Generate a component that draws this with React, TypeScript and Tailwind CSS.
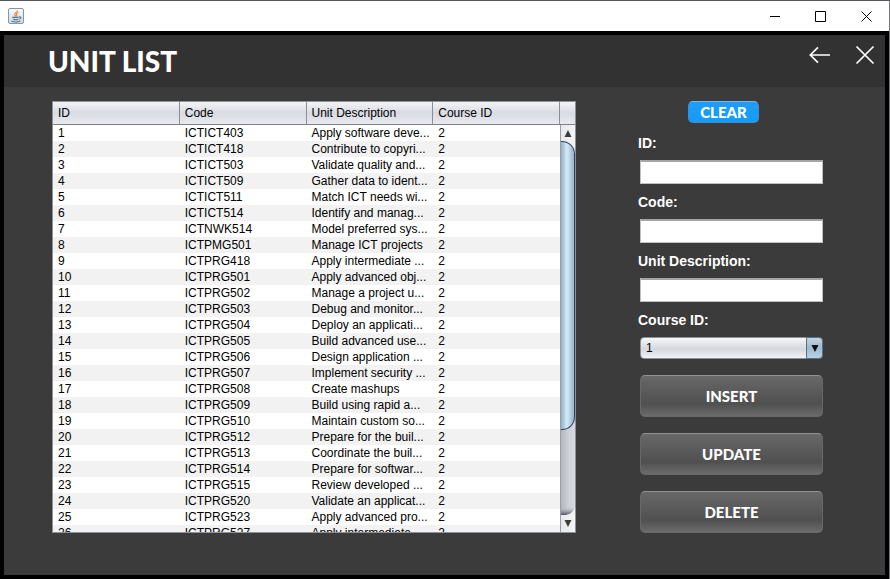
import { useId, type ReactNode } from 'react';

const columns = ['ID', 'Code', 'Unit Description', 'Course ID'];

const units: [string, string][] = [
  ['ICTICT403', 'Apply software deve...'],
  ['ICTICT418', 'Contribute to copyri...'],
  ['ICTICT503', 'Validate quality and...'],
  ['ICTICT509', 'Gather data to ident...'],
  ['ICTICT511', 'Match ICT needs wi...'],
  ['ICTICT514', 'Identify and manag...'],
  ['ICTNWK514', 'Model preferred sys...'],
  ['ICTPMG501', 'Manage ICT projects'],
  ['ICTPRG418', 'Apply intermediate ...'],
  ['ICTPRG501', 'Apply advanced obj...'],
  ['ICTPRG502', 'Manage a project u...'],
  ['ICTPRG503', 'Debug and monitor...'],
  ['ICTPRG504', 'Deploy an applicati...'],
  ['ICTPRG505', 'Build advanced use...'],
  ['ICTPRG506', 'Design application ...'],
  ['ICTPRG507', 'Implement security ...'],
  ['ICTPRG508', 'Create mashups'],
  ['ICTPRG509', 'Build using rapid a...'],
  ['ICTPRG510', 'Maintain custom so...'],
  ['ICTPRG512', 'Prepare for the buil...'],
  ['ICTPRG513', 'Coordinate the buil...'],
  ['ICTPRG514', 'Prepare for softwar...'],
  ['ICTPRG515', 'Review developed ...'],
  ['ICTPRG520', 'Validate an applicat...'],
  ['ICTPRG523', 'Apply advanced pro...'],
  ['ICTPRG527', 'Apply intermediate ...'],
];

function JavaIcon() {
  return (
    <svg width="16" height="16" viewBox="0 0 16 16" fill="none" aria-hidden="true">
      <defs>
        <linearGradient id="tile" x1="0" y1="0" x2="0" y2="1">
          <stop offset="0" stopColor="#fafafa" />
          <stop offset="1" stopColor="#cfdbe3" />
        </linearGradient>
      </defs>
      <rect x="0.5" y="0.5" width="15" height="15" rx="1.5" fill="url(#tile)" stroke="#7f97a8" />
      <path d="M9.5 2.3C10 4 6.2 4.8 6.6 6.5C6.8 7.3 7.8 7.8 7.6 8.5M10.4 4.6C8.2 5.4 8 6.2 8.8 7.2C9.1 7.7 8.8 8.2 8.5 8.5" stroke="#e5813b" strokeWidth="1.1" />
      <path d="M4.2 9.4H10.6M5.2 11.2C6.8 11.8 8.8 11.8 10.4 11.2M11 9C13.6 8.2 13.6 10.6 11.2 11.2M3.5 13C5.8 14 10 14 12.4 13" stroke="#4d7591" strokeWidth="1.1" />
    </svg>
  );
}

function WindowButton({ label, children }: { label: string; children: ReactNode }) {
  return (
    <button type="button" aria-label={label} className="flex h-[30px] w-[46px] items-center justify-center text-black">
      <svg width="11" height="11" viewBox="0 0 11 11" fill="none" stroke="currentColor" aria-hidden="true">
        {children}
      </svg>
    </button>
  );
}

function UnitTable() {
  return (
    <div className="flex min-h-0 min-w-0 flex-1 overflow-hidden border border-[#8e9197] bg-white text-xs text-black">
      <div className="min-w-0 flex-1 overflow-hidden">
        <table className="w-full table-fixed border-separate border-spacing-0 text-left">
          <thead>
            <tr className="h-[23px]">
              {columns.map((name) => (
                <th
                  key={name}
                  scope="col"
                  className="border-r border-b border-r-[#8b8e97] border-b-[#7e818a] bg-linear-to-b from-[#f3f4f6] via-[#d9dbe2] to-[#e8eaf0] px-[5px] py-0 font-normal"
                >
                  {name}
                </th>
              ))}
            </tr>
          </thead>
          <tbody>
            {units.map(([code, description], index) => (
              <tr key={code} className="h-4 leading-4 even:bg-[#f2f2f2]">
                <td className="px-[5px] py-0">{index + 1}</td>
                <td className="px-[5px] py-0">{code}</td>
                <td className="px-[5px] py-0 whitespace-nowrap">{description}</td>
                <td className="px-[5px] py-0">2</td>
              </tr>
            ))}
          </tbody>
        </table>
      </div>
      <div className="flex w-[15px] shrink-0 flex-col">
        <div className="h-[23px] shrink-0 border-b border-[#7e818a] bg-linear-to-b from-[#f3f4f6] via-[#d9dbe2] to-[#e8eaf0]" />
        <div className="flex min-h-0 flex-1 flex-col border-l border-[#9a9da5] bg-linear-to-r from-[#b3b6bd] via-[#cccfd6] to-[#d8dae0]">
          <button type="button" aria-label="Scroll up" className="flex h-4 shrink-0 items-center justify-center bg-linear-to-r from-[#e8e9ec] to-[#f5f5f6]">
            <svg width="8" height="8" viewBox="0 0 8 8" aria-hidden="true"><path d="M4 1L7.5 8H0.5Z" fill="#3c3c3c" /></svg>
          </button>
          <div className="flex min-h-0 flex-1 flex-col bg-linear-to-b from-[#f0f1f3] from-5% to-transparent to-6%">
            <div className="h-[79%] rounded-r-[13px] border border-l-0 border-[#2b4459] bg-linear-to-r from-[#8eb0ca] via-[#d8ecf8] via-45% to-[#93b2cc]" />
          </div>
          <svg width="14" height="8" viewBox="0 0 14 8" className="shrink-0" aria-hidden="true">
            <defs>
              <linearGradient id="trackEnd" x1="0" y1="0" x2="0" y2="1">
                <stop offset="0" stopColor="#b9bcc3" stopOpacity="0" />
                <stop offset="1" stopColor="#4f5156" />
              </linearGradient>
            </defs>
            <path d="M0 0H14Q12 7 5 8H0Z" fill="url(#trackEnd)" />
            <path d="M14 0Q12 7 5 8H14Z" fill="#f1f1f3" />
          </svg>
          <button type="button" aria-label="Scroll down" className="flex h-[17px] shrink-0 items-center justify-center bg-linear-to-r from-[#e8e9ec] to-[#f5f5f6]">
            <svg width="8" height="8" viewBox="0 0 8 8" aria-hidden="true"><path d="M4 7L0.5 0H7.5Z" fill="#3c3c3c" /></svg>
          </button>
        </div>
      </div>
    </div>
  );
}

function TextField({ label }: { label: string }) {
  const id = useId();
  return (
    <div className="mb-[10px] flex flex-col">
      <label htmlFor={id} className="mb-[9px] text-sm leading-4 font-bold text-white">{label}</label>
      <input id={id} type="text" className="ml-0.5 h-6 border border-t-2 border-[#c0c0c0] border-t-[#a5a5a5] bg-white px-1 text-xs text-black outline-none" />
    </div>
  );
}

function ActionButton({ children }: { children: ReactNode }) {
  return (
    <button
      type="button"
      className="mt-4 ml-0.5 h-[42px] rounded-[5px] border border-[#686868] border-t-[#909090] bg-linear-to-b from-[#686868] via-[#505050] via-70% to-[#6c6c6c] font-[Lato,sans-serif] text-[15px] font-black text-white"
    >
      {children}
    </button>
  );
}

export default function App() {
  return (
    <div className="flex h-screen flex-col border-t border-r border-t-[#59565a] border-r-[#77757a] bg-white font-['Liberation_Sans',Arial,sans-serif]">
      <header className="flex h-[30px] shrink-0 items-center justify-between pl-2">
        <JavaIcon />
        <div className="flex">
          <WindowButton label="Minimize"><path d="M1 5.5H11" /></WindowButton>
          <WindowButton label="Maximize"><path d="M0.5 0.5H10.5V10.5H0.5Z" /></WindowButton>
          <WindowButton label="Close"><path d="M0.5 0.5L10.5 10.5M10.5 0.5L0.5 10.5" /></WindowButton>
        </div>
      </header>

      <div className="flex min-h-0 flex-1 flex-col border-4 border-black bg-[#3b3b3b]">
        <div className="flex h-[52px] shrink-0 items-start justify-between bg-[#323232] pr-[10px] pl-11 text-white">
          <h1 className="pt-2 font-[Lato,sans-serif] text-[28px] leading-9 font-black">UNIT LIST</h1>
          <div className="flex gap-6 pt-[10px]">
            <button type="button" aria-label="Back">
              <svg width="22" height="20" viewBox="0 0 22 20" fill="none" stroke="currentColor" strokeWidth="1.7" aria-hidden="true">
                <path d="M21 10H1.5M9 2.3L1.3 10L9 17.7" />
              </svg>
            </button>
            <button type="button" aria-label="Close unit list">
              <svg width="20" height="20" viewBox="0 0 20 20" fill="none" stroke="currentColor" strokeWidth="1.7" aria-hidden="true">
                <path d="M1.5 1.5L18.5 18.5M18.5 1.5L1.5 18.5" />
              </svg>
            </button>
          </div>
        </div>

        <main className="flex min-h-0 flex-1 gap-[62px] pt-[14px] pr-[62px] pb-[42px] pl-12">
          <UnitTable />
          <form className="flex w-[185px] shrink-0 flex-col">
            <button
              type="reset"
              className="mb-3 ml-[50px] h-[22px] w-[71px] rounded-[5px] border border-[#3c8fd0] border-t-[#7fb6df] bg-linear-to-b from-[#1f9cf8] to-[#149cfb] font-[Lato,sans-serif] text-[15px] leading-5 font-black text-white"
            >
              CLEAR
            </button>
            <TextField label="ID:" />
            <TextField label="Code:" />
            <TextField label="Unit Description:" />
            <label htmlFor="course" className="mb-[9px] text-sm leading-4 font-bold text-white">Course ID:</label>
            <div className="relative ml-0.5 h-[22px]">
              <select id="course" defaultValue="1" className="block h-full w-full appearance-none rounded border border-[#8d9097] bg-linear-to-b from-[#f6f7f9] via-[#d5d7de] via-55% to-[#f0f2f7] pl-[5px] text-xs text-black outline-none">
                <option>1</option>
                <option>2</option>
              </select>
              <span className="pointer-events-none absolute inset-y-0 right-0 flex w-[17px] items-center justify-center rounded-r border border-[#54718a] bg-linear-to-b from-[#c5d5e2] via-[#9fb9ce] to-[#bcd2e4]">
                <svg width="8" height="7" viewBox="0 0 8 7" aria-hidden="true"><path d="M0.5 0H7.5L4 7Z" fill="#111" /></svg>
              </span>
            </div>
            <ActionButton>INSERT</ActionButton>
            <ActionButton>UPDATE</ActionButton>
            <ActionButton>DELETE</ActionButton>
          </form>
        </main>
      </div>
    </div>
  );
}
